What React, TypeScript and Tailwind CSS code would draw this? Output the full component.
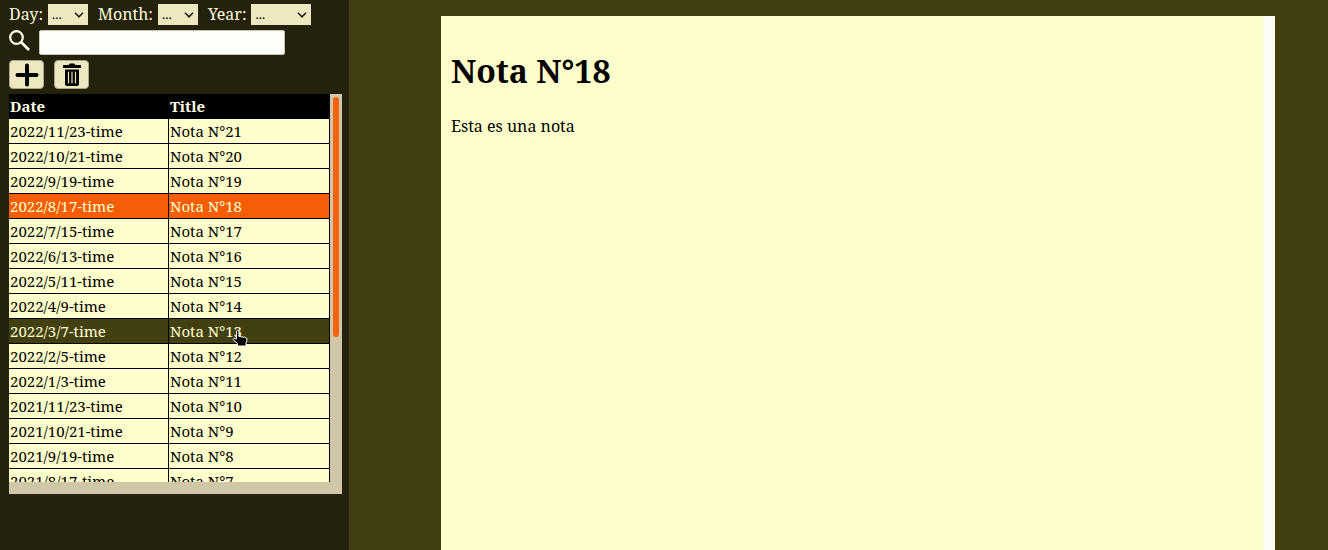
import React from "react";

type Note = { date: string; title: string };

const notes: Note[] = [
  ["2022/11/23", 21], ["2022/10/21", 20], ["2022/9/19", 19], ["2022/8/17", 18],
  ["2022/7/15", 17], ["2022/6/13", 16], ["2022/5/11", 15], ["2022/4/9", 14],
  ["2022/3/7", 13], ["2022/2/5", 12], ["2022/1/3", 11], ["2021/11/23", 10],
  ["2021/10/21", 9], ["2021/9/19", 8], ["2021/8/17", 7],
].map(([d, n]) => ({ date: `${d}-time`, title: `Nota N°${n}` }));

function rowStyle(title: string) {
  if (title === "Nota N°18") return "bg-[#f55e06] text-[#ffffd0]";
  if (title === "Nota N°13") return "bg-[#424010] text-[#ffffd0]";
  return "bg-[#ffffcc] text-black";
}

function Filter({ label, wide }: { label: string; wide?: boolean }) {
  return (
    <label className="flex items-center gap-[5px]">
      {label}:
      <span className={`relative flex h-[21px] ${wide ? "w-[60px]" : "w-10"}`}>
        <select className="w-full appearance-none bg-[#eee8c0] pl-1 text-[13px] leading-5 text-black">
          <option>...</option>
        </select>
        <svg className="pointer-events-none absolute top-2 right-1 h-[6px] w-[10px]" viewBox="0 0 10 6" fill="none" stroke="#222" strokeWidth="1.6">
          <path d="M1 0.8 5 4.8 9 0.8" />
        </svg>
      </span>
    </label>
  );
}

const toolButton = "flex h-[29px] w-[35px] items-center justify-center rounded-[4px] border border-[#aaa58c] bg-[#eee8c0]";

export default function App() {
  return (
    <div className="flex h-screen overflow-hidden bg-[#424010] font-['Noto_Serif','Droid_Serif','Liberation_Serif',serif] text-black">
      <aside className="flex w-[349px] shrink-0 flex-col bg-[#24220c] pr-[7px] pl-[9px] pt-[3px] text-[#fffdd8]">
        <div className="flex h-[22px] items-center gap-[10px] text-base">
          <Filter label="Day" />
          <Filter label="Month" />
          <Filter label="Year" wide />
        </div>
        <div className="mt-[5px] flex h-[25px] gap-[9px]">
          <svg className="h-[21px] w-[21px]" viewBox="0 0 21 21" fill="none" stroke="#fffff0">
            <circle cx="7.5" cy="7.5" r="6.3" strokeWidth="2.2" />
            <path d="M12 12 20 20" strokeWidth="2.6" />
          </svg>
          <input aria-label="Search" type="text" className="w-[246px] rounded-[2px] border border-[#c8c4b0] bg-[#fffffa] px-1 text-black" />
        </div>
        <div className="mt-[5px] flex gap-[10px]">
          <button aria-label="Add note" className={toolButton}>
            <svg className="h-6 w-6" viewBox="0 0 24 24" stroke="#000" strokeWidth="4" strokeLinecap="round">
              <path d="M12 2.5v19M2.5 12h19" />
            </svg>
          </button>
          <button aria-label="Delete note" className={toolButton}>
            <svg className="h-6 w-[18px]" viewBox="0 0 18 24">
              <path d="M1 2h4.500l1.300-1.500h4.400L12.500 2H17a.8.8 0 0 1 0 3H1a.8.8 0 0 1 0-3Z" />
              <path d="M2 6.500h14V21q0 2-2 2H4q-2 0-2-2Z" />
              <path d="M5.500 9v11M9 9v11M12.500 9v11" stroke="#eee8c0" strokeWidth="1.2" strokeLinecap="round" />
            </svg>
          </button>
        </div>
        <div className="mt-[5px] grid w-full grid-cols-[1fr_12px] grid-rows-[388px_12px] bg-[#cfc7a8]">
          <div className="overflow-hidden">
            <table className="w-full table-fixed border-separate border-spacing-0 text-left text-[15px] leading-6">
              <thead>
                <tr className="bg-black text-[#ffffe0]">
                  <th className="w-40 border-r border-b border-black px-px py-0 font-bold">Date</th>
                  <th className="border-r border-b border-black px-px py-0 font-bold">Title</th>
                </tr>
              </thead>
              <tbody>
                {notes.map((n) => (
                  <tr key={n.title} className={rowStyle(n.title)}>
                    <td className="border-r border-b border-black px-px py-0">{n.date}</td>
                    <td className="border-r border-b border-black px-px py-0">
                      <span className="relative">
                        {n.title}
                        {n.title === "Nota N°13" && (
                          <svg className="absolute top-2 -right-[6px] h-[18px] w-4" viewBox="0 0 16 18" aria-hidden="true">
                            <path d="M4.500 2q1.200-1.500 2.400 0V7.500l6 .8q2.600.5 2.100 3L14 14v3H5.500v-2.500L1 10.500q.3-2 3.500-.5Z" fill="#000" stroke="#fff" />
                          </svg>
                        )}
                      </span>
                    </td>
                  </tr>
                ))}
              </tbody>
            </table>
          </div>
          <div className="flex justify-center pt-[3px]">
            <div className="h-[240px] w-[6px] rounded-full bg-[#f66210]" />
          </div>
        </div>
      </aside>
      <main className="flex flex-1 pt-4 pr-[53px] pl-[92px]">
        <article className="flex-1 border-r-[12px] border-[#fcfbf4] bg-[#ffffcc] px-[10px] pt-[31px]">
          <h1 className="text-[32px] leading-[48px] font-bold">Nota N°18</h1>
          <p className="mt-[19px] text-base">Esta es una nota</p>
        </article>
      </main>
    </div>
  );
}
